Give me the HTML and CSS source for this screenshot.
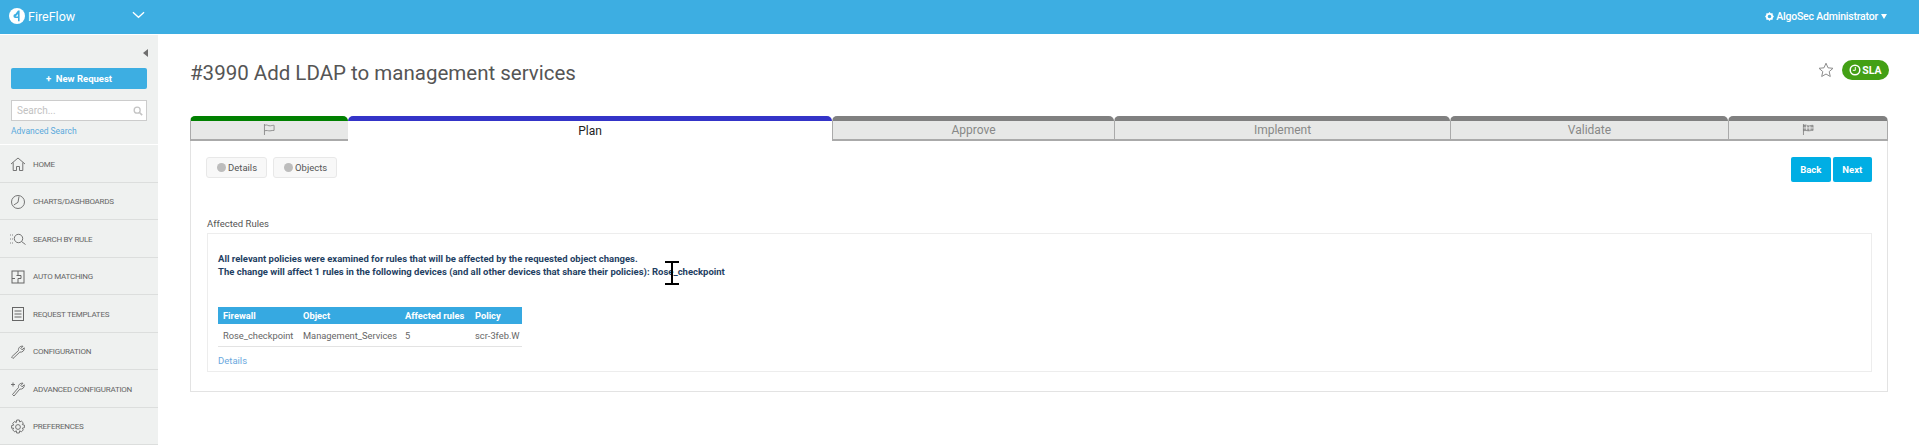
FILE: index.html
```html
<!DOCTYPE html>
<html lang="en">
<head>
<meta charset="utf-8">
<title>FireFlow</title>
<link rel="stylesheet" href="styles.css">
</head>
<body>
<header class="topbar">
  <div class="brand">
    <svg class="logo" viewBox="0 0 16 16"><circle cx="8" cy="8" r="8" fill="#fff"/><path d="M10.6 2.6v10.6H9V10H6.4a2 2 0 0 1 0-4L9 2.6z" fill="#3daee2"/><path d="M8.9 6 6.6 8.6h2.3z" fill="#fff"/></svg>
    <span class="brand-name">FireFlow</span>
    <svg class="chev" viewBox="0 0 14 8"><path d="M1 1l6 5.5L13 1" fill="none" stroke="#fff" stroke-width="1.4"/></svg>
  </div>
  <div class="user">
    <svg class="gear-small" viewBox="0 0 10 10"><path d="M5 .3v9.4M.3 5h9.400M1.700 1.700l6.600 6.600M8.300 1.700 1.700 8.300" stroke="#fff" stroke-width="1.400"/><circle cx="5" cy="5" r="3" fill="#3daee2" stroke="#fff" stroke-width="2"/></svg>
    <span>AlgoSec Administrator</span>
    <span class="caret"></span>
  </div>
</header>
<div class="layout">
  <aside class="sidebar">
    <div class="side-top">
      <div class="collapse-row"><span class="collapse"></span></div>
      <button class="new-request">+&nbsp; New Request</button>
      <div class="search">
        <span>Search...</span>
        <svg viewBox="0 0 12 12"><circle cx="5" cy="5" r="3.6" fill="none" stroke="#c4c4c4" stroke-width="1.6"/><path d="M7.8 7.8 11 11" stroke="#c4c4c4" stroke-width="2"/></svg>
      </div>
      <a class="adv">Advanced Search</a>
    </div>
    <nav class="menu">
      <div class="item"><svg viewBox="0 0 16 16"><path d="M1 8l7-6 7 6M3.2 6.5V14.500h3.300v-4h3v4h3.300V6.500" fill="none" stroke="#666" stroke-width=".9"/></svg><span>HOME</span></div>
      <div class="item"><svg viewBox="0 0 16 16"><circle cx="8" cy="8" r="6.500" fill="none" stroke="#666" stroke-width=".9"/><path d="M9 2.500 8 8.300 3.800 11" fill="none" stroke="#666" stroke-width=".9"/></svg><span>CHARTS/DASHBOARDS</span></div>
      <div class="item"><svg viewBox="0 0 16 16"><path d="M0 4h3M0 8h3M0 12h3" stroke="#777" stroke-width=".9" stroke-dasharray="1 1"/><circle cx="8.500" cy="7.500" r="4.200" fill="none" stroke="#666" stroke-width=".9"/><path d="M11.500 10.500 15.500 13.500" stroke="#666" stroke-width=".9"/></svg><span>SEARCH BY RULE</span></div>
      <div class="item"><svg viewBox="0 0 16 16"><rect x="2" y="2" width="12" height="12" fill="none" stroke="#666" stroke-width="1"/><path d="M8 2v4.500M6.500 6.500h4.500v3H8V14M2 9.500h3" fill="none" stroke="#666" stroke-width="1"/></svg><span>AUTO MATCHING</span></div>
      <div class="item"><svg viewBox="0 0 16 16"><rect x="2.500" y="1.500" width="11" height="13" fill="none" stroke="#666" stroke-width="1"/><path d="M4.500 5h7M4.500 8h7M4.500 11h7" stroke="#666" stroke-width="1"/></svg><span>REQUEST TEMPLATES</span></div>
      <div class="item"><svg viewBox="0 0 16 16"><path d="M1.500 13 8.500 6.500C8 4 10 1.800 13 2.200L10.800 4.500l1.200 1.300 2.300-2c.4 2.800-2 4.800-4.500 4.300L3 14.500z" fill="none" stroke="#666" stroke-width=".9"/></svg><span>CONFIGURATION</span></div>
      <div class="item"><svg viewBox="0 0 16 16"><path d="M2.500 13.500 8.500 6.500C8 4 10 1.800 13 2.200L10.800 4.500l1.200 1.300 2.300-2c.4 2.800-2 4.800-4.500 4.300L4 15zM1 3.500h4M3 1.500v4" fill="none" stroke="#666" stroke-width=".9"/></svg><span>ADVANCED CONFIGURATION</span></div>
      <div class="item"><svg viewBox="0 0 16 16"><circle cx="8" cy="8" r="2.400" fill="none" stroke="#666" stroke-width=".9"/><path d="M6.700 1h2.600l.4 2 1.700-.9 1.900 1.800-1 1.700 2.100.5v2.600l-2.100.5 1 1.700-1.900 1.900-1.700-1-.4 2.200H6.700l-.4-2.200-1.700 1-1.900-1.900 1-1.700L1.600 9.200V6.600l2.100-.5-1-1.700 1.900-1.800 1.700.9z" fill="none" stroke="#666" stroke-width=".9"/></svg><span>PREFERENCES</span></div>
    </nav>
  </aside>
  <main class="main">
    <div class="title-row">
      <h1>#3990 Add LDAP to management services</h1>
      <div class="title-actions">
        <svg class="star" viewBox="0 0 16 16"><path d="M8 1.200 10 5.800l5 .5-3.800 3.300 1.100 4.900L8 12l-4.300 2.500 1.100-4.900L1 6.300l5-.5z" fill="none" stroke="#8c8c8c" stroke-width="1"/></svg>
        <span class="sla"><svg viewBox="0 0 12 12"><circle cx="6" cy="6" r="4.800" fill="none" stroke="#fff" stroke-width="1.500"/><path d="M6.300 3v3.300H3.800" fill="none" stroke="#fff" stroke-width="1"/></svg>SLA</span>
      </div>
    </div>
    <div class="tabs">
      <div class="tab t-first done"><svg class="flag" viewBox="0 0 14 12"><path d="M1.500 0v12M1.500 1.500c3-1.500 4 1 6.500.5s3-.7 4-.5V7c-1.500-.3-2.500.4-4.500.5S4 6.500 1.500 7.500" fill="none" stroke="#8a8a8a"/></svg></div>
      <div class="tab t-plan active">Plan</div>
      <div class="tab t-approve">Approve</div>
      <div class="tab t-impl">Implement</div>
      <div class="tab t-valid">Validate</div>
      <div class="tab t-last"><svg class="flag" viewBox="0 0 14 12"><path d="M1.500 0v12" stroke="#8a8a8a"/><path d="M1.500 1.500c3-1.500 4 1 6.500.5s3-.7 4-.5V7c-1.500-.3-2.500.4-4.500.5S4 6.500 1.500 7.500z" fill="#9a9a9a" stroke="#7a7a7a" stroke-width=".7"/><path d="M5 1.500v5M8.500 2v5M1.500 4.300h11" stroke="#eee" stroke-width="1"/></svg></div>
    </div>
    <section class="panel">
      <div class="panel-bar">
        <div class="chips">
          <span class="chip"><i></i>Details</span>
          <span class="chip"><i></i>Objects</span>
        </div>
        <div class="nav-btns">
          <button class="btn">Back</button>
          <button class="btn">Next</button>
        </div>
      </div>
      <div class="section-label">Affected Rules</div>
      <div class="box">
        <p class="lead">All relevant policies were examined for rules that will be affected by the requested object changes.<br>The change will affect 1 rules in the following devices (and all other devices that share their policies): Rose_checkpoint</p>
        <table class="rules">
          <thead><tr><th class="c1">Firewall</th><th class="c2">Object</th><th class="c3">Affected rules</th><th class="c4">Policy</th></tr></thead>
          <tbody><tr><td>Rose_checkpoint</td><td>Management_Services</td><td>5</td><td>scr-3feb.W</td></tr></tbody>
        </table>
        <a class="details-link">Details</a>
      </div>
    </section>
  </main>
</div>
<svg class="ibeam" viewBox="0 0 14 24"><path d="M0 1h14M0 23h14M7 1v22" fill="none" stroke="#000" stroke-width="2"/></svg>
</body>
</html>
```
FILE: styles.css
```css
* { box-sizing: border-box; }
html, body { margin: 0; height: 445px; overflow: hidden; background: #fff; }
body { font-family: Roboto, "Noto Sans", sans-serif; color: #555; position: relative; }
.topbar { height: 34px; background: #3daee2; display: flex; justify-content: space-between; align-items: center; padding: 0 32px 2px 9px; color: #fff; }
.brand { display: flex; align-items: center; }
.logo { width: 16px; height: 16px; }
.brand-name { font-size: 12.500px; margin-left: 3px; width: 104px; }
.chev { width: 13px; height: 8px; margin-top: -3px; }
.user { display: flex; align-items: center; font-size: 10.500px; font-weight: 500; letter-spacing: -.2px; }
.gear-small { width: 9px; height: 9px; margin-right: 2px; }
.caret { width: 0; height: 0; border-left: 3px solid transparent; border-right: 3px solid transparent; border-top: 5px solid #fff; margin-left: 3px; }
.layout { display: flex; margin-top: 1px; height: 410px; }
.sidebar { width: 158px; background: #eff1f0; flex: none; height: 410px; }
.side-top { height: 109px; padding: 0 11px; }
.collapse-row { display: flex; justify-content: flex-end; height: 33px; padding-top: 14px; margin-right: -1px; }
.collapse { width: 0; height: 0; border-top: 4px solid transparent; border-bottom: 4px solid transparent; border-right: 5px solid #6e6e6e; }
.new-request { display: block; width: 136px; height: 21px; border: 0; border-radius: 2px; background: #3daee2; color: #fff; font: 700 9.500px Roboto, sans-serif; padding: 0; }
.search { margin-top: 11px; width: 136px; height: 21px; border: 1px solid #ccc; background: #fff; display: flex; align-items: center; justify-content: space-between; padding: 0 3px 0 5px; color: #c2c2c2; font-size: 10px; }
.search svg { width: 10px; height: 10px; }
.adv { display: block; margin-top: 5px; font-size: 8.500px; color: #5aa9dc; }
.menu { border-top: 1px solid #fff; }
.item { height: 37.500px; display: flex; align-items: center; padding: 2px 0 0 10px; border-bottom: 1px solid #dcdedd; font-size: 8px; color: #666; letter-spacing: -.25px; }
.item svg { width: 16px; height: 16px; margin-right: 7px; flex: none; }
.main { flex: 1; padding: 0 31px 0 32px; min-width: 0; }
.title-row { display: flex; justify-content: space-between; height: 81px; padding-top: 23px; }
h1 { margin: 0; font-size: 20.500px; font-weight: 400; color: #555; line-height: 30px; }
.title-actions { display: flex; align-items: flex-start; padding-top: 2px; margin-right: -1px; }
.star { width: 16px; height: 16px; margin-top: 2px; margin-right: 8px; }
.sla { width: 47px; height: 20px; border-radius: 10px; background: #43a015; color: #fff; font-size: 10.500px; font-weight: 700; display: flex; align-items: center; justify-content: center; gap: 1px; }
.sla svg { width: 12px; height: 12px; }
.tabs { display: flex; height: 25px; }
.tab { position: relative; background: #e7e8e7; border-top: 5px solid #808080; border-left: 1px solid #aaa; border-bottom: 2px solid #aaa; border-radius: 5px 5px 0 0; color: #888; font-size: 12px; display: flex; align-items: center; justify-content: center; flex: none; padding-bottom: 1px; }
.t-first { width: 158px; border-top-color: #008000; }
.t-plan { width: 484px; border-top-color: #3434c8; background: #fff; border-left: 0; border-bottom: 0; color: #222; }
.t-approve { width: 282px; }
.t-impl { width: 336px; }
.t-valid { width: 278px; }
.t-last { width: 160px; border-right: 1px solid #aaa; }
.flag { width: 13px; height: 11px; }
.panel { height: 251px; border: 1px solid #e3e3e3; border-top: 0; padding: 16px 15px 0 16px; }
.panel-bar { display: flex; justify-content: space-between; height: 62px; }
.chips { display: flex; gap: 6px; height: 21px; margin-left: -1px; }
.chip { display: flex; align-items: center; height: 21px; padding: 0 9px 0 10px; border: 1px solid #e8e8e8; border-radius: 3px; background: #f8f8f8; font-size: 9.500px; color: #555; }
.chip i { width: 9px; height: 9px; border-radius: 50%; background: #bdbdbd; margin-right: 2px; }
.nav-btns { display: flex; gap: 2px; }
.btn { width: 39.500px; height: 25px; border: 0; border-radius: 2px; background: #00aee4; color: #fff; font: 700 9.500px Roboto, sans-serif; padding: 0; }
.section-label { font-size: 9.500px; line-height: 12px; color: #555; margin-bottom: 3px; margin-top: -1px; }
.box { height: 139px; border: 1px solid #ededed; padding: 18px 10px 0; }
.lead { margin: 0; font-size: 9.500px; line-height: 13px; font-weight: 700; color: #1f3f63; }
.rules { margin-top: 29px; border-collapse: collapse; width: 304px; table-layout: fixed; font-size: 9.300px; }
th { background: #36a9e1; color: #fff; font-weight: 700; text-align: left; height: 17px; padding: 0 0 0 5px; border-bottom: 1px solid #fff; }
td { height: 22px; padding: 0 0 0 5px; border-bottom: 1px solid #e3e3e3; color: #666; white-space: nowrap; }
.c1 { width: 80px; }
.c2 { width: 102px; }
.c3 { width: 70px; }
.c4 { width: 52px; }
.details-link { display: block; margin-top: 8px; font-size: 9.500px; color: #6aa8de; }
.ibeam { position: absolute; left: 665px; top: 261px; width: 14px; height: 24px; }
```
